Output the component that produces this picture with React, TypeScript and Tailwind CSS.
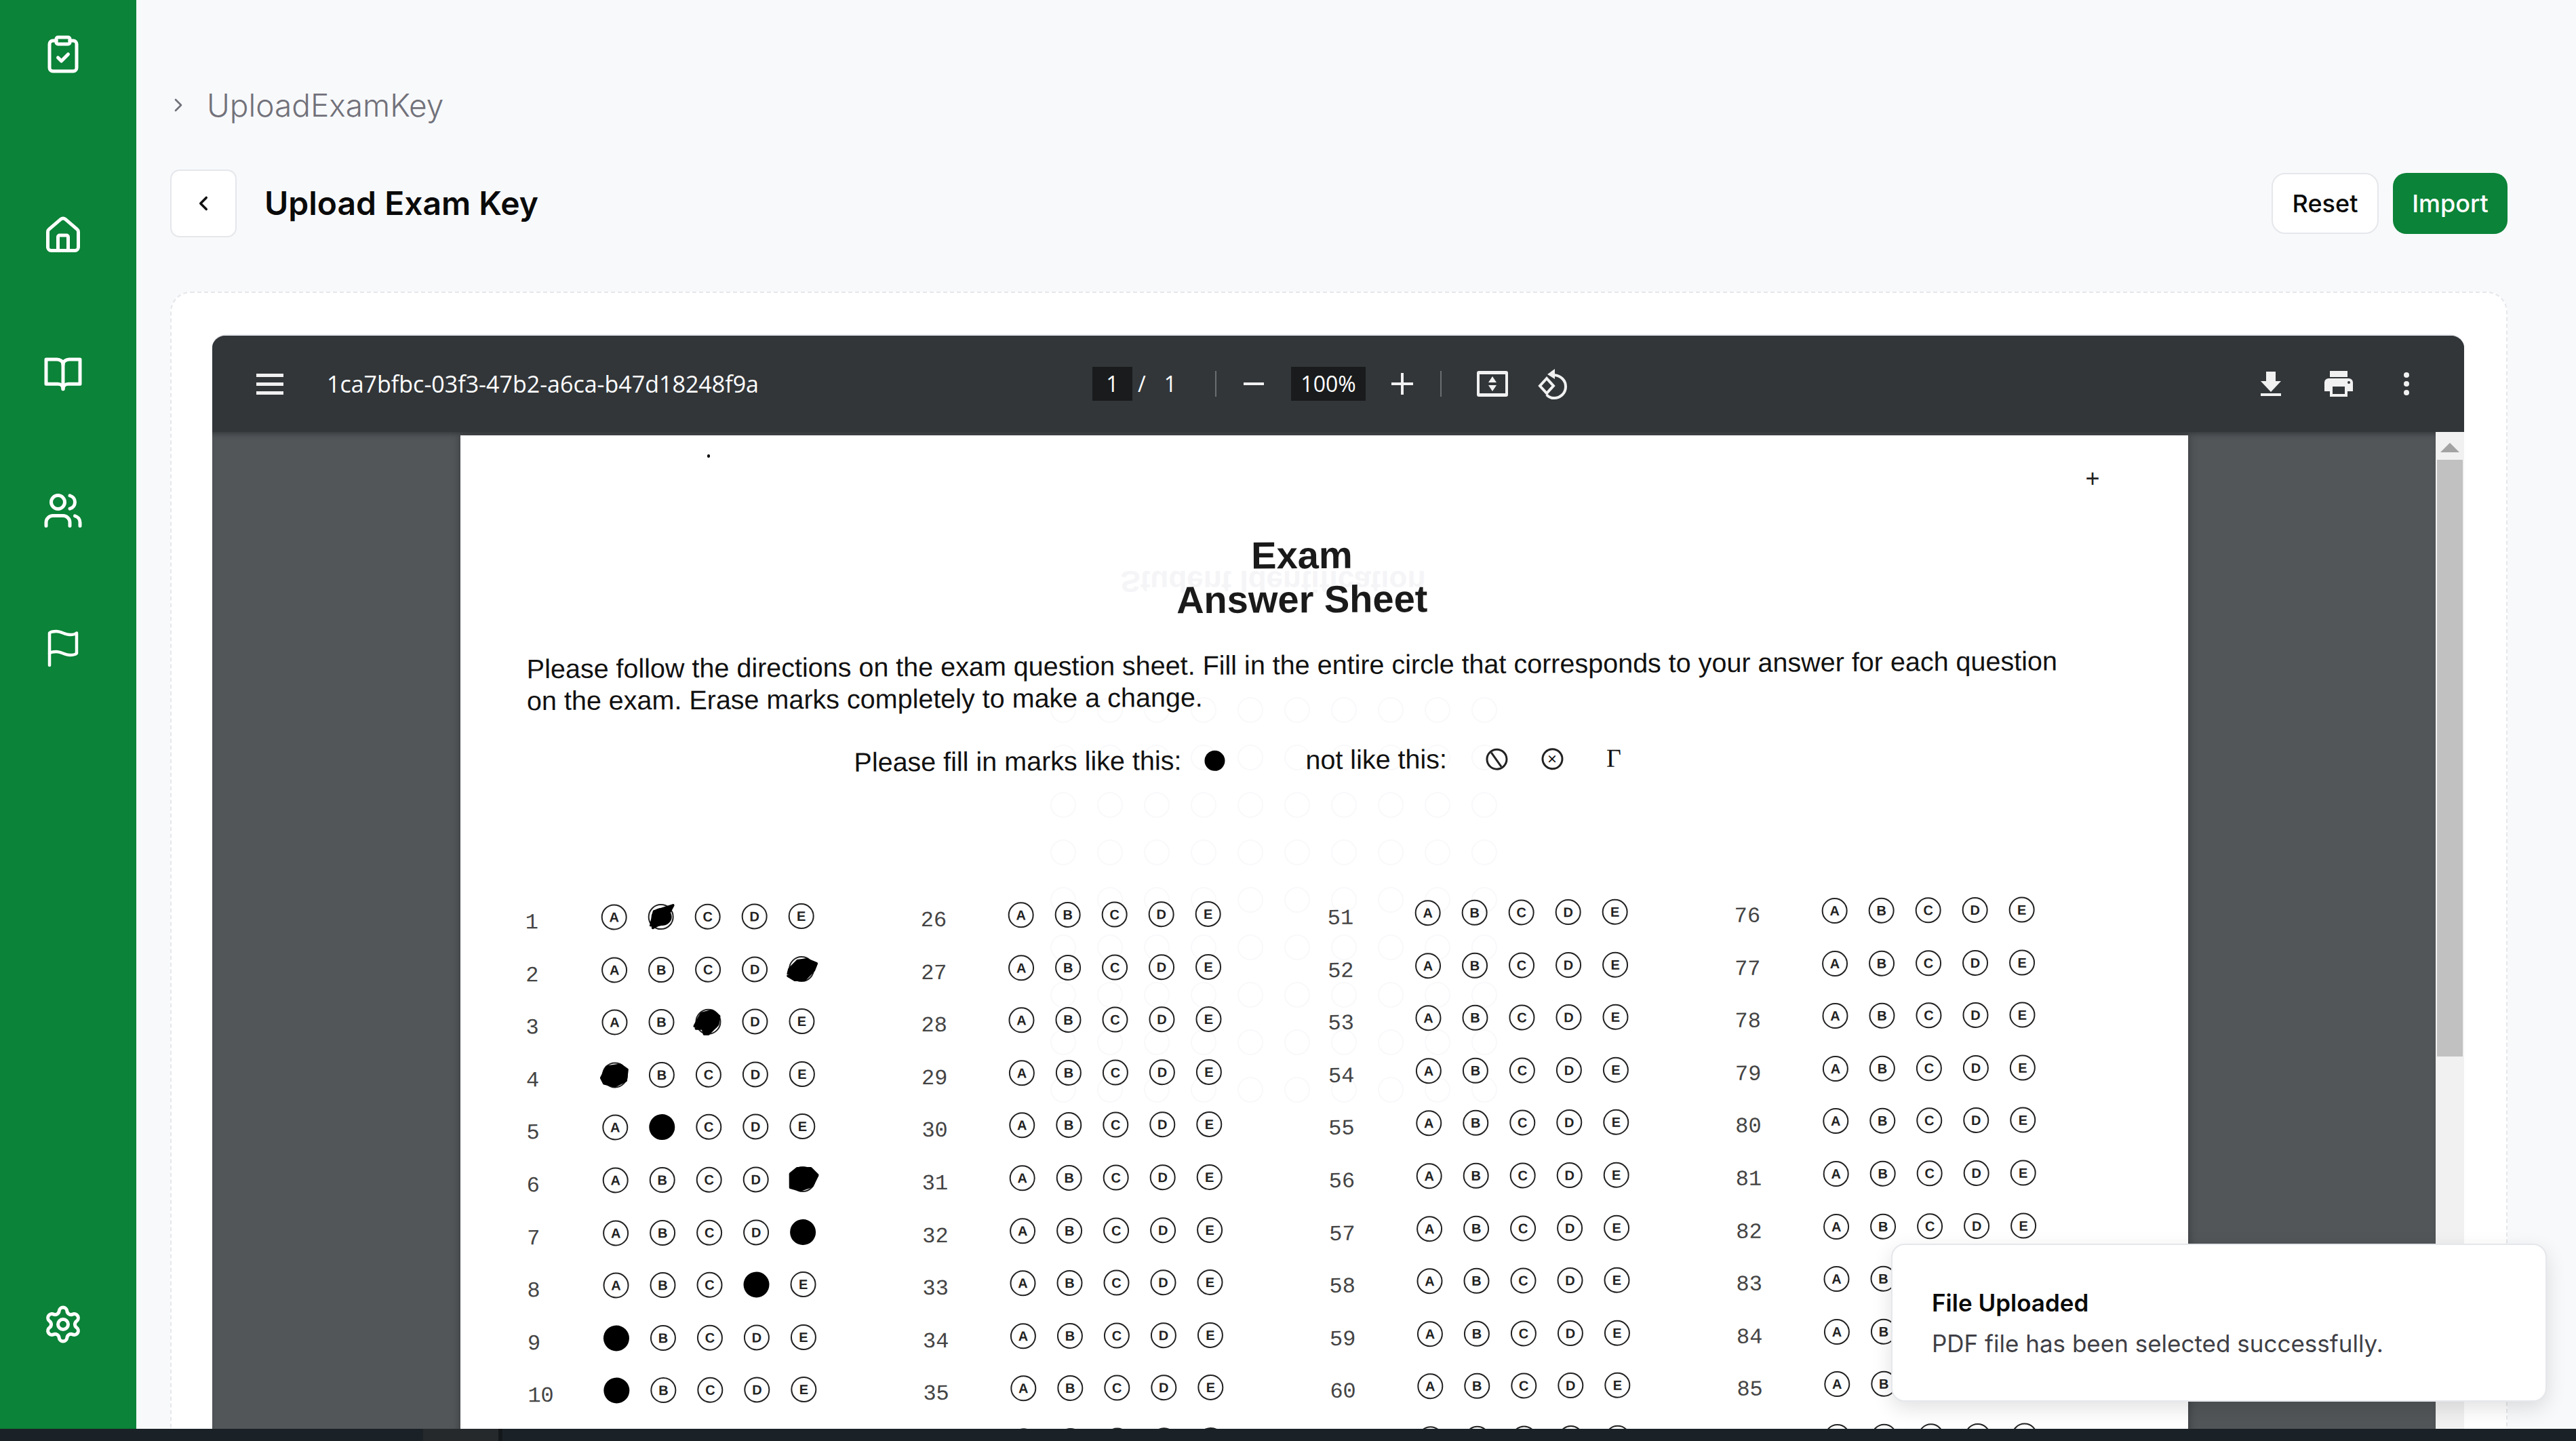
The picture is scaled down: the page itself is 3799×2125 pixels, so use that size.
import { ChevronLeft, ChevronRight, ClipboardCheck, House, Settings, Users } from "lucide-react"

type Mark = { fill: "solid" | "scribble"; letter: string }

const LETTERS = ["A", "B", "C", "D", "E"]

// answers filled in on the scan, question number -> mark
const marks: Record<number, Mark> = {
  1: { letter: "B", fill: "scribble" },
  2: { letter: "E", fill: "scribble" },
  3: { letter: "C", fill: "scribble" },
  4: { letter: "A", fill: "scribble" },
  5: { letter: "B", fill: "solid" },
  6: { letter: "E", fill: "scribble" },
  7: { letter: "E", fill: "solid" },
  8: { letter: "D", fill: "solid" },
  9: { letter: "A", fill: "solid" },
  10: { letter: "A", fill: "solid" },
}

const scribbles: Record<number, string> = {
  1: "M7 34 L12 12 L40 3 L34 14 L10 36 L32 24 L8 28 L30 8 L14 20 L26 30 L10 34",
  2: "M2 28 L4 20 L16 8 L30 6 L44 12 L40 22 L26 36 L12 36 L2 30 L20 14 L38 14 L16 32 L34 24 L8 24",
  3: "M1 28 L12 8 L28 4 L38 12 L36 24 L22 38 L16 38 L14 30 L4 30 L24 14 L32 20 L14 26",
  4: "M2 24 L10 8 L30 5 L40 12 L38 28 L22 36 L6 32 L2 24 L20 14 L34 20 L14 30",
  6: "M4 12 L14 4 L34 4 L44 14 L36 30 L18 36 L4 32 L4 12 L30 12 L10 28 L36 20",
}

function Scribble({ n }: { n: number }) {
  return (
    <svg viewBox="0 0 46 42" className="absolute left-[-5px] top-[-3px] h-[42px] w-[46px]">
      <ellipse cx="23" cy="20" rx="15" ry="13" fill="#000" />
      <path d={scribbles[n]} fill="#000" stroke="#000" strokeWidth="4" strokeLinejoin="round" />
    </svg>
  )
}

function Bubble({ letter, mark, n }: { letter: string; mark?: Mark; n: number }) {
  const active = mark && mark.letter === letter
  if (active && mark.fill === "solid") {
    return <div className="h-[38px] w-[38px] shrink-0 rounded-full bg-black" />
  }
  return (
    <div className="relative flex h-[38px] w-[38px] shrink-0 items-center justify-center rounded-full border-2 border-[#222] font-['Liberation_Sans',sans-serif] text-[20px] font-bold text-[#222]">
      {letter}
      {active && <Scribble n={n} />}
    </div>
  )
}

function AnswerColumn({ start, first }: { start: number; first?: boolean }) {
  const rows = Array.from({ length: 11 }, (_, i) => start + i)
  return (
    <div className="w-[600px] shrink-0">
      {rows.map((n) => (
        <div key={n} className="flex h-[77.6px] items-start">
          <div
            className={`w-[129px] shrink-0 pt-[9px] font-['Liberation_Mono',monospace] text-[32px] leading-[36px] text-[#444] ${first ? "pl-[17px]" : ""}`}
          >
            {n}
          </div>
          <div className="flex gap-[31px]">
            {LETTERS.map((l) => (
              <Bubble key={l} letter={l} mark={marks[n]} n={n} />
            ))}
          </div>
        </div>
      ))}
    </div>
  )
}

function GhostMarks() {
  // show-through from the back of the scanned sheet
  const rows = [0, 1, 2, 3, 4, 5, 6, 7, 8]
  const cols = [0, 1, 2, 3, 4, 5, 6, 7, 8, 9]
  return (
    <div className="pointer-events-none absolute left-[870px] top-[195px]">
      <div className="ml-[104px] h-[40px] -scale-y-100 font-['Liberation_Sans',sans-serif] text-[44px] leading-[40px] font-bold whitespace-nowrap text-[#f5f5f7]">
        Student Identification
      </div>
      <div className="mt-[151px] flex flex-col gap-[32px]">
        {rows.map((r) => (
          <div key={r} className="flex gap-[31px]">
            {cols.map((c) => (
              <div key={c} className="h-[38px] w-[38px] rounded-full border-2 border-[#f9f9fb]" />
            ))}
          </div>
        ))}
      </div>
    </div>
  )
}

function ScanPage() {
  return (
    <div className="relative h-[1600px] w-[2548px] shrink-0 overflow-hidden bg-white shadow-[0_0_12px_rgba(0,0,0,0.35)]">
      <GhostMarks />
      <div className="absolute left-[364px] top-[28px] h-[5px] w-[4px] rounded-full bg-black" />
      <div className="absolute left-[2397px] top-[52px] font-['Liberation_Sans',sans-serif] text-[36px] leading-[24px] text-[#222]">+</div>
      <div className="relative -rotate-[0.3deg] pt-[144px] font-['Liberation_Sans',sans-serif] text-[#111]">
        <div className="pr-[60px] text-center text-[56px] leading-[65px] font-bold text-[#1a1a1a]">
          <div>Exam</div>
          <div>Answer Sheet</div>
        </div>
        <div className="mt-[41px] pl-[100px] text-[39.5px] leading-[47px] whitespace-nowrap">
          <div>Please follow the directions on the exam question sheet. Fill in the entire circle that corresponds to your answer for each question</div>
          <div>on the exam. Erase marks completely to make a change.</div>
        </div>
        <div className="mt-[46px] flex h-[47px] items-center pl-[582px] text-[39.5px] leading-[47px]">
          <span>Please fill in marks like this:</span>
          <div className="ml-[34px] h-[30px] w-[30px] rounded-full bg-black" />
          <span className="ml-[119px]">not like this:</span>
          <div className="relative ml-[57px] h-[32px] w-[32px] overflow-hidden rounded-full border-[3px] border-[#222]">
            <div className="absolute left-[11px] top-[-4px] h-[36px] w-[3px] -rotate-[35deg] bg-[#222]" />
          </div>
          <div className="ml-[50px] flex h-[32px] w-[32px] items-center justify-center rounded-full border-[3px] border-[#222] text-[24px] leading-none">×</div>
          <span className="ml-[64px] font-['Liberation_Serif',serif] text-[38px]">Γ</span>
        </div>
        <div className="mt-[184px] flex pl-[79px]">
          <AnswerColumn start={1} first />
          <AnswerColumn start={26} />
          <AnswerColumn start={51} />
          <AnswerColumn start={76} />
        </div>
      </div>
    </div>
  )
}

function PdfToolbar() {
  return (
    <div className="relative z-10 flex h-[142px] shrink-0 items-center bg-[#323639] font-['Open_Sans',sans-serif] text-[32px] text-white">
      <div className="ml-[65px] flex h-[31px] w-[40px] flex-col justify-between">
        <div className="h-[5px] bg-[#f1f1f1]" />
        <div className="h-[5px] bg-[#f1f1f1]" />
        <div className="h-[5px] bg-[#f1f1f1]" />
      </div>
      <div className="ml-[64px] w-[1129px] text-[34px]">1ca7bfbc-03f3-47b2-a6ca-b47d18248f9a</div>
      <div className="flex h-[50px] w-[59px] items-center justify-center bg-[#191b1c]">1</div>
      <div className="ml-[8px]">/</div>
      <div className="ml-[27px]">1</div>
      <div className="ml-[57px] h-[38px] w-[2px] bg-[#6b6e70]" />
      <div className="ml-[40px] h-[4px] w-[30px] bg-[#f1f1f1]" />
      <div className="ml-[40px] flex h-[50px] w-[110px] items-center justify-center bg-[#191b1c]">100%</div>
      <svg viewBox="0 0 32 32" className="ml-[38px] h-[32px] w-[32px]" fill="#f1f1f1">
        <path d="M14 0h4v14h14v4H18v14h-4V18H0v-4h14z" />
      </svg>
      <div className="ml-[40px] h-[38px] w-[2px] bg-[#6b6e70]" />
      {/* fit to page */}
      <svg viewBox="0 0 46 38" className="ml-[52px] h-[38px] w-[46px]" fill="#f1f1f1">
        <path d="M3 0h40a3 3 0 0 1 3 3v32a3 3 0 0 1-3 3H3a3 3 0 0 1-3-3V3a3 3 0 0 1 3-3zm1 5v28h38V5z" />
        <path d="M23 8l6 9H17zM23 30l-6-9h12z" />
      </svg>
      {/* rotate */}
      <svg viewBox="0 0 44 46" className="ml-[44px] h-[46px] w-[44px]" fill="none" stroke="#f1f1f1" strokeWidth="4">
        <path d="M13 15L3 26l10 11 10-11z" />
        <path d="M24 10c10 1 17 8 17 17 0 10-8 17-17 17-5 0-9-2-11-5" />
        <path d="M25 1v15L14 9z" fill="#f1f1f1" stroke="none" />
      </svg>
      <div className="flex-1" />
      <svg viewBox="0 0 30 36" className="h-[36px] w-[30px]" fill="#f1f1f1">
        <path d="M8 0h14v14h8L15 30 0 14h8zM0 32h30v4H0z" />
      </svg>
      <svg viewBox="0 0 42 38" className="ml-[64px] h-[38px] w-[42px]" fill="#f1f1f1">
        <path d="M8 0h26v9H8zM6 11h30a6 6 0 0 1 6 6v13h-8v8H8v-8H0V17a6 6 0 0 1 6-6zm6 12v11h18V23zm24-8a2 2 0 1 0 0 4 2 2 0 0 0 0-4z" fillRule="evenodd" />
      </svg>
      <div className="ml-[75px] mr-[81px] flex h-[34px] w-[8px] flex-col justify-between">
        <div className="h-[8px] rounded-full bg-[#f1f1f1]" />
        <div className="h-[8px] rounded-full bg-[#f1f1f1]" />
        <div className="h-[8px] rounded-full bg-[#f1f1f1]" />
      </div>
    </div>
  )
}

function PdfViewer() {
  return (
    <div className="flex h-[1800px] flex-col overflow-hidden rounded-t-[20px] border-t-2 border-[#e5e7eb] bg-[#525659]">
      <PdfToolbar />
      <div className="flex min-h-0 flex-1">
        <div className="flex flex-1 justify-center pt-[5px] shadow-[inset_0_8px_8px_-6px_rgba(0,0,0,0.4)]">
          <ScanPage />
        </div>
        <div className="flex w-[42px] shrink-0 flex-col items-center bg-[#f1f1f1]">
          <div className="mt-[16px] h-0 w-0 border-x-[14px] border-b-[14px] border-x-transparent border-b-[#a3a3a3]" />
          <div className="mt-[11px] h-[880px] w-[38px] bg-[#c1c1c1]" />
        </div>
      </div>
    </div>
  )
}

function BookIcon() {
  return (
    <svg viewBox="0 0 24 24" width={60} height={60} fill="none" stroke="currentColor" strokeWidth="2" strokeLinejoin="round" strokeLinecap="round">
      <path d="M2 4h6.5c1.7 0 3.5 1.2 3.5 3 0-1.8 1.8-3 3.5-3H22v14.5h-7c-1.5 0-3 1-3 3 0-2-1.5-3-3-3H2z" />
      <path d="M12 7v14.5" />
    </svg>
  )
}

function FlagIcon() {
  return (
    <svg viewBox="0 0 24 24" width={60} height={60} fill="none" stroke="currentColor" strokeWidth="1.8" strokeLinejoin="round" strokeLinecap="round">
      <path d="M4 15s1-1 4-1 5 2 8 2 4-1 4-1V3s-1 1-4 1-5-2-8-2-4 1-4 1z" />
      <path d="M4 22v-7" />
    </svg>
  )
}

export default function App() {
  return (
    <div className="relative flex h-[2125px] w-[3799px] flex-col overflow-hidden bg-[#f8f9fb] font-['Inter',sans-serif]">
      <div className="flex min-h-0 flex-1 overflow-hidden">
        {/* Sidebar */}
        <aside className="flex w-[201px] shrink-0 flex-col items-center bg-[#0b8338] pb-[124px] pt-[50px] pr-[15px] text-white">
          <ClipboardCheck size={60} strokeWidth={2} />
          <div className="mt-[207px] flex flex-col gap-[143px]">
            <House size={60} strokeWidth={2} />
            <BookIcon />
            <Users size={60} strokeWidth={2} />
            <FlagIcon />
          </div>
          <div className="mt-auto">
            <Settings size={60} strokeWidth={2} />
          </div>
        </aside>

        {/* Main */}
        <main className="min-w-0 flex-1 pl-[50px] pr-[101px]">
          <div className="mt-[125px] flex h-[60px] items-center text-[#71717a]">
            <ChevronRight size={32} strokeWidth={2} className="-ml-[4px]" />
            <span className="ml-[26px] text-[46px] leading-none font-light">UploadExamKey</span>
          </div>

          <div className="mt-[65px] flex h-[100px] items-center">
            <button className="flex h-[100px] w-[98px] items-center justify-center rounded-[14px] border-2 border-[#e5e7eb] bg-white text-[#111]">
              <ChevronLeft size={34} strokeWidth={2.5} />
            </button>
            <h1 className="ml-[41px] text-[48px] font-semibold text-[#0a0a0a]">Upload Exam Key</h1>
            <div className="ml-auto flex gap-[21px]">
              <button className="h-[90px] w-[158px] rounded-[20px] border-2 border-[#e5e7eb] bg-white text-[36px] font-medium text-[#0a0a0a]">Reset</button>
              <button className="h-[90px] w-[169px] rounded-[20px] bg-[#0b8338] text-[36px] font-medium text-white">Import</button>
            </div>
          </div>

          <div className="mt-[80px] h-[1800px] rounded-t-[30px] border-2 border-dashed border-[#e5e7eb] bg-white pl-[60px] pr-[62px] pt-[61px]">
            <PdfViewer />
          </div>
        </main>
      </div>

      {/* Bottom strip */}
      <div className="flex h-[18px] shrink-0 bg-[#1b2227]">
        <div className="ml-[624px] w-[111px] bg-[#25292c]" />
        <div className="w-[6px] bg-[#14181b]" />
      </div>

      {/* Toast */}
      <div className="absolute bottom-[58px] right-[43px] flex h-[233px] w-[967px] flex-col justify-center rounded-[20px] border-2 border-[#e5e7eb] bg-white pl-[58px] shadow-[0_10px_30px_rgba(0,0,0,0.12)]">
        <div className="text-[35px] leading-[44px] font-semibold text-[#0a0a0a]">File Uploaded</div>
        <div className="mt-[16px] text-[35px] leading-[44px] text-[#3f3f46]">PDF file has been selected successfully.</div>
      </div>
    </div>
  )
}
